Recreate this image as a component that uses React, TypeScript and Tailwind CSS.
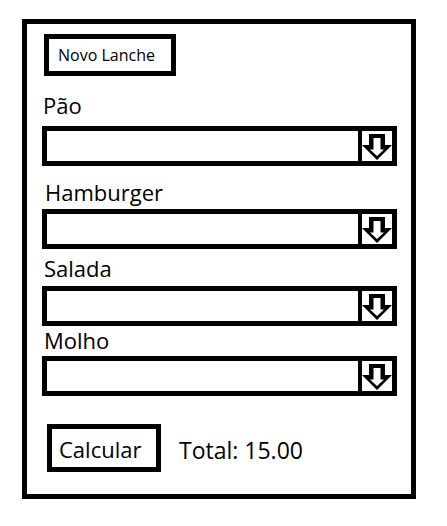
import React from "react";

function Arrow() {
  return (
    <svg width="30" height="30" viewBox="0 0 30 30" className="block">
      <path d="M7 3 H23 V14 H30 L15 29 L0 14 H7 Z" fill="black" />
      <path d="M11.5 7 H18.5 V18.5 H22 L15 25 L8 18.5 H11.5 Z" fill="white" />
    </svg>
  );
}

function Select({ mt }: { mt: string }) {
  return (
    <div className={`${mt} ml-[15px] w-[355px] h-[40px] border-[5px] border-black flex`}>
      <div className="w-[311px] h-full" />
      <div className="w-[34px] h-full border-l-[4px] border-black flex items-center justify-center">
        <Arrow />
      </div>
    </div>
  );
}

export default function App() {
  const font = { fontFamily: "'Open Sans', Lato, sans-serif" };
  return (
    <div className="w-[447px] h-[526px] bg-white pt-[19px] pl-[22px]" style={font}>
      <div className="w-[394px] h-[480px] border-[5px] border-black flex flex-col items-start text-black">
        <div className="mt-[10px] ml-[17px] w-[132px] h-[42px] border-[5px] border-black pl-[9px] pt-[6px] text-[16px] leading-[20px]">
          Novo Lanche
        </div>

        <div className="mt-[18px] ml-[16px] text-[22px] leading-[22px]">Pão</div>
        <Select mt="mt-[10px]" />

        <div className="mt-[15px] ml-[18px] text-[22px] leading-[22px]">Hamburger</div>
        <Select mt="mt-[6px]" />

        <div className="mt-[8px] ml-[17px] text-[22px] leading-[22px]">Salada</div>
        <Select mt="mt-[7px]" />

        <div className="mt-[3px] ml-[17px] text-[22px] leading-[22px]">Molho</div>
        <Select mt="mt-[5px]" />

        <div className="mt-[28px] ml-[20px] flex items-center">
          <div className="w-[114px] h-[48px] border-[5px] border-black pl-[7px] pt-[9px] text-[22px] leading-[23px]">
            Calcular
          </div>
          <div className="ml-[18px] mt-[4px] text-[23px] leading-[23px]">Total: 15.00</div>
        </div>
      </div>
    </div>
  );
}
